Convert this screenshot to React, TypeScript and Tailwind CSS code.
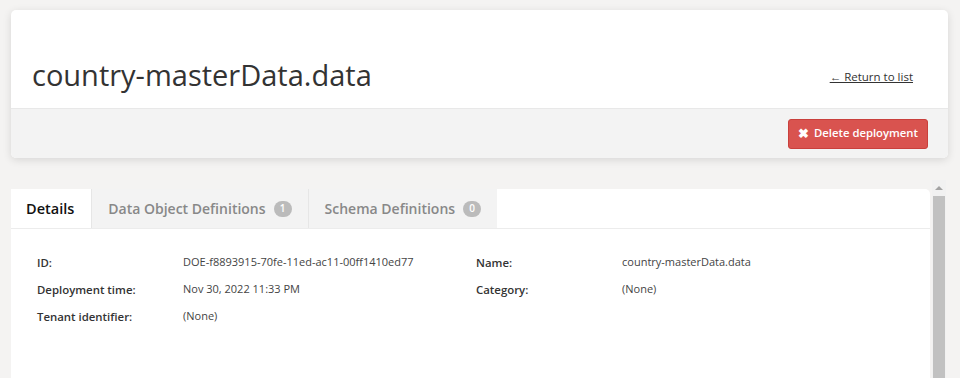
import { useState } from 'react';

const tabs = [
  { key: 'details', label: 'Details' },
  { key: 'objects', label: 'Data Object Definitions', count: 1 },
  { key: 'schemas', label: 'Schema Definitions', count: 0 },
];

function Field({ label, value }: { label: string; value: string }) {
  return (
    <div className="flex h-[27px] items-center">
      <div className="w-[146px] shrink-0 text-[11.4px] font-semibold text-[#333]">{label}</div>
      <div className="text-[11px] text-[#444]">{value}</div>
    </div>
  );
}

export default function App() {
  const [active, setActive] = useState('details');

  return (
    <div
      className="h-[378px] overflow-hidden bg-[#f4f3f2] text-[12px]"
      style={{ fontFamily: '"Open Sans", sans-serif' }}
    >
      <div className="px-[11px] pt-[10px] pr-[12px]">
        <div className="overflow-hidden rounded-[5px] bg-white shadow-[0_2px_8px_rgba(0,0,0,0.12)]">
          <div className="flex h-[98px] items-end justify-between pb-[19px] pl-[21px] pr-[35px]">
            <h1 className="text-[29px] leading-none text-[#333]">country-masterData.data</h1>
            <a href="#" className="mb-[4px] text-[11.5px] text-[#333] underline">
              ← Return to list
            </a>
          </div>
          <div className="flex h-[50px] items-center justify-end border-t border-[#e8e8e8] bg-[#f3f3f3] pr-[20px]">
            <button className="flex h-[30px] items-center gap-[5px] rounded-[3px] border border-[#c9403c] bg-[#d9534f] px-[9px] text-[11.3px] font-semibold text-white">
              <span className="text-[13px]">✖</span>
              Delete deployment
            </button>
          </div>
        </div>
      </div>

      <div className="mt-[31px] flex pl-[11px] pr-[14px]">
        <div className="h-[200px] flex-1 rounded-tr-[5px] bg-white">
          <div className="flex h-[40px] border-b border-[#ececec]">
            {tabs.map((t) => {
              const on = t.key === active;
              return (
                <button
                  key={t.key}
                  onClick={() => setActive(t.key)}
                  className={
                    on
                      ? 'flex items-center gap-[8px] bg-white pl-[15px] pr-[17px] text-[14.5px] font-semibold text-[#111]'
                      : 'flex items-center gap-[8px] border-l border-[#e6e6e6] bg-[#f3f3f3] px-[16px] text-[14px] font-semibold text-[#888]'
                  }
                >
                  {t.label}
                  {t.count !== undefined && (
                    <span className="flex h-[16px] min-w-[18px] items-center justify-center rounded-full bg-[#bbb] px-[5px] text-[10px] font-semibold text-white">
                      {t.count}
                    </span>
                  )}
                </button>
              );
            })}
          </div>
          <div className="grid grid-cols-[439px_1fr] pl-[26px] pt-[20px]">
            <div>
              <Field label="ID:" value="DOE-f8893915-70fe-11ed-ac11-00ff1410ed77" />
              <Field label="Deployment time:" value="Nov 30, 2022 11:33 PM" />
              <Field label="Tenant identifier:" value="(None)" />
            </div>
            <div>
              <Field label="Name:" value="country-masterData.data" />
              <Field label="Category:" value="(None)" />
            </div>
          </div>
        </div>
        <div className="-mt-[9px] ml-[2px] flex w-[14px] flex-col bg-[#f1f1f1]">
          <div className="flex h-[16px] items-center justify-center">
            <div className="h-0 w-0 border-x-[4px] border-b-[4px] border-x-transparent border-b-[#a3a3a3]" />
          </div>
          <div className="mx-[1px] flex-1 bg-[#c1c1c1]" />
        </div>
      </div>
    </div>
  );
}
